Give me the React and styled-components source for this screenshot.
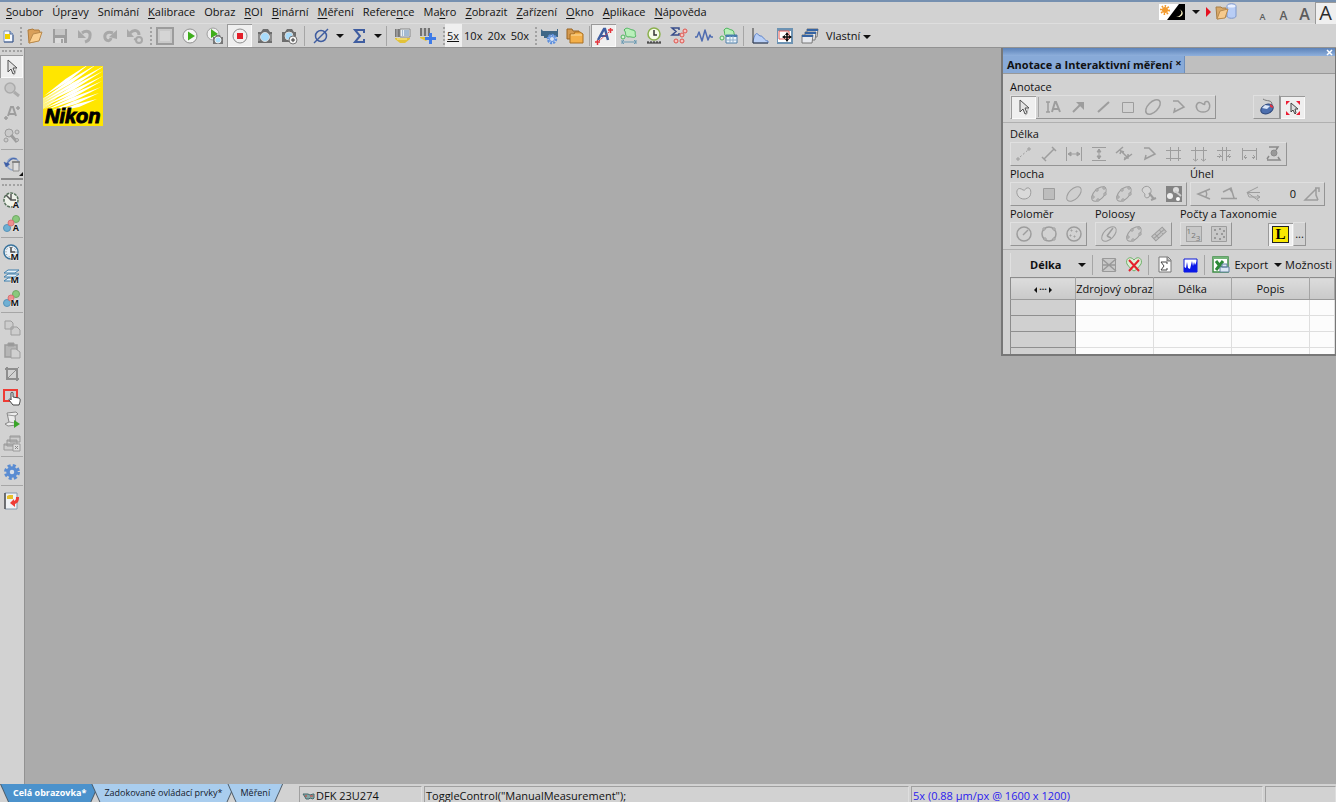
import React, { useState } from "react";
import styled, { createGlobalStyle } from "styled-components";

const GRAY = "#9d9d9d";

const icons = {
  newDoc: (
    <>
      <path d="M5 5h6l3 3v8H5z" fill="#f4f8ff" stroke="#7f96bd" />
      <path d="M11 5v3h3" fill="#b5c6e2" stroke="#4e6a9a" />
      <path d="M6 8h5v5H6z" fill="#f0d000" />
      <path d="M5 16h9M14 9v7" stroke="#3d5787" />
    </>
  ),
  open: (
    <>
      <path d="M3 4l5-1 1 1h5l1 2-3 9-8 2z" fill="#d9a05a" stroke="#b07c3c" />
      <path d="M4 17L8 8l9-2-3 9z" fill="#fbcf8f" stroke="#b98a4d" />
    </>
  ),
  save: (
    <>
      <path d="M3 3h14v14H3z" fill="#9e9e9e" />
      <path d="M5 3h10v6H5z" fill="#c6c6c6" />
      <path d="M5 12h9v5H5z" fill="#dcdcdc" />
      <path d="M11 13h2v4h-2z" fill="#a2a2a2" />
    </>
  ),
  undo: (
    <g fill="none" stroke="#a8a8a8" strokeWidth="3">
      <path d="M7 7c4-3 9-2 8 3 0 3-2 5-5 6" />
      <path d="M3 4v8h8z" fill="#a8a8a8" stroke="none" />
    </g>
  ),
  redo: (
    <g fill="none" stroke="#a8a8a8" strokeWidth="3">
      <path d="M13 7C7 5 4 8 5 12c1 3 5 4 6 0" />
      <path d="M9 11l8-7v9z" fill="#a8a8a8" stroke="none" />
    </g>
  ),
  undoList: (
    <g fill="none" stroke="#a8a8a8" strokeWidth="2">
      <path d="M5 7c4-4 9-3 9 2" strokeWidth="3" />
      <path d="M2 3v8h7z" fill="#a8a8a8" stroke="none" />
      <circle cx="14" cy="14" r="3" />
      <path d="M9 13l3 1" />
    </g>
  ),
  blank: (
    <>
      <path d="M2 2h16v16H2z" fill="#c9c9c9" stroke="#9c9c9c" strokeWidth="2" />
      <path d="M5 5h10v10H5z" fill="#d5d5d5" />
    </>
  ),
  play: (
    <>
      <circle cx="10" cy="10" r="7" fill="#f5f5f5" stroke="#909090" />
      <path d="M8 5.500l7 4.500-7 4.500z" fill="#3fae1c" />
    </>
  ),
  playCam: (
    <>
      <circle cx="8" cy="8" r="6" fill="#f0f0f0" stroke="#a0a0a0" />
      <path d="M6 3l7 5-7 4z" fill="#3fae1c" />
      <path d="M8 11h2l1-2h4l1 2h2v7H8z" fill="#777" />
      <circle cx="13" cy="14" r="3" fill="#aee0fb" stroke="#eee" />
    </>
  ),
  stop: (
    <>
      <circle cx="10" cy="10" r="7" fill="#f1f1f1" stroke="#8d8d8d" />
      <path d="M7 7h6v6H7z" fill="#e3202a" />
    </>
  ),
  camera: (
    <>
      <path d="M3 6h3l2-3h5l2 3h2v11H3z" fill="#6d6d6d" />
      <path d="M3 8h2v7H3zM15 8h2v7h-2z" fill="#8c8c8c" />
      <circle cx="10" cy="11" r="4.500" fill="#a9dcfb" stroke="#dcdcdc" />
    </>
  ),
  cameraPlus: (
    <>
      <path d="M2 6h3l2-3h5l2 3h2v10H2z" fill="#6d6d6d" />
      <circle cx="9" cy="10" r="4" fill="#a9dcfb" stroke="#dcdcdc" />
      <circle cx="13" cy="14" r="4" fill="#f2f2f2" stroke="#777" />
      <path d="M11 14h4M13 12v4" stroke="#333" />
    </>
  ),
  diameter: (
    <g fill="none" stroke="#3f5da0">
      <circle cx="10" cy="10" r="5.500" strokeWidth="1.500" />
      <path d="M3 17L17 3" strokeWidth="1.500" />
    </g>
  ),
  sigma: <path d="M15 7V4H6l5 6-5 6h9v-3" fill="none" stroke="#3f5da0" strokeWidth="2" />,
  objective: (
    <>
      <path d="M2 3h6v8H2z" fill="#777" />
      <path d="M4 3v8" stroke="#bbb" />
      <path d="M7 3h10v8H7z" fill="#e9eef2" stroke="#888" />
      <path d="M9 5h1M11 5h5M9 7h1M11 7h5M9 9h1M11 9h5" stroke="#5f86b0" />
      <path d="M2 12h15v1l-5 4H7l-5-4z" fill="#e2c239" />
      <path d="M4 13h10" stroke="#fbf0a4" />
    </>
  ),
  objectiveAdd: (
    <>
      <path d="M2 2h10v8H2z" fill="#737373" />
      <path d="M5 2v8M9 2v8" stroke="#d7d7d7" strokeWidth="1.500" />
      <path d="M2 11h9v1l-3 3-6-3z" fill="#e2c239" />
      <path d="M11 7h3v4h4v3h-4v4h-3v-4H7v-3h4z" fill="#3e7be8" />
    </>
  ),
  camSet: (
    <>
      <path d="M1 3l2 2h14V3h1v8h-3l-5-1-3 2H4v-2H1z" fill="#3f6786" />
      <circle cx="12" cy="13" r="4" fill="#c8dcf8" stroke="#5d8edb" strokeWidth="2.500" strokeDasharray="2 1" />
      <circle cx="12" cy="13" r="2.500" fill="#dbe5f3" stroke="#5d8edb" />
    </>
  ),
  folders: (
    <>
      <path d="M2 3h5l1 2h6v8H2z" fill="#d49a50" stroke="#9a6523" />
      <path d="M5 8h4l1-2h5l3 2v9H5z" fill="#f4b04a" stroke="#a86f22" />
      <path d="M6 9h11" stroke="#fbdca0" />
    </>
  ),
  annotate: (
    <>
      <path d="M4 14L10 3h1l3 11" fill="none" stroke="#3f5da0" strokeWidth="2.500" />
      <path d="M7 10h6" stroke="#3f5da0" strokeWidth="2" />
      <path d="M14 4h5M16.500 2v5M1 16h5M3.500 14v5" stroke="#e3343c" strokeWidth="1.500" />
      <path d="M5 15L16 5" stroke="#e3343c" strokeDasharray="2 1" />
    </>
  ),
  areaLen: (
    <>
      <path d="M5 4c3-4 6 0 9 0 4 1 1 4 3 6-2 3-5 0-8 1-4-1-1-4-4-7z" fill="#b9efba" stroke="#4cb45c" />
      <circle cx="4" cy="11" r="2" fill="#d8f3d6" stroke="#4cb45c" />
      <path d="M3 16h14M3 14v4M17 14v4M5 14l-2 2 2 2M15 14l2 2-2 2" stroke="#6b9ab2" fill="none" />
    </>
  ),
  timer: (
    <>
      <circle cx="10" cy="8" r="6" fill="#f5fae8" stroke="#8bb04e" strokeWidth="1.500" />
      <path d="M10 4v5h3" fill="none" stroke="#333" strokeWidth="1.500" />
      <path d="M3 17h14M4 15v2M7 15v2M10 15v2M13 15v2M16 15v2" stroke="#222" />
    </>
  ),
  sigmaDots: (
    <>
      <path d="M10 4V2H3l4 3.500L3 9h7V7" fill="none" stroke="#384d8a" strokeWidth="1.500" />
      <g fill="#f5c5c2" stroke="#e0534c">
        <circle cx="13" cy="9" r="2" /><circle cx="16" cy="5" r="2" />
        <circle cx="7" cy="15" r="2" /><circle cx="13" cy="15" r="2" />
      </g>
    </>
  ),
  wave: <path d="M1 11h2l2-5 3 9 3-11 3 10 2-5 1 2h2" fill="none" stroke="#4f6cb0" strokeWidth="1.500" strokeLinejoin="round" />,
  areaTable: (
    <>
      <path d="M5 4c3-4 5 0 8 0 3 1 1 4 3 5-2 3-6 2-9 1-2-1-1-3-2-6z" fill="#b9efba" stroke="#4cb45c" />
      <circle cx="3" cy="12" r="2" fill="#d8f3d6" stroke="#4cb45c" />
      <path d="M7 9h11v8H7z" fill="#eef5fb" stroke="#4f7fa8" />
      <path d="M7 10h11" stroke="#477dad" strokeWidth="2" />
      <path d="M7 14h11M11 10v7M14 10v7" stroke="#8fb0cc" />
    </>
  ),
  histogram: (
    <>
      <path d="M3 15c3-11 4-7 7-5 3-1 4 5 8 5v2H3z" fill="#b9cff5" stroke="#5c82c9" />
      <path d="M3 2v15h15" fill="none" stroke="#3c3c3c" />
    </>
  ),
  moveView: (
    <>
      <path d="M2 2h16v16H2z" fill="#6d93b3" />
      <path d="M3 5h13v11H3z" fill="#fff" />
      <path d="M4 5h10v8H4z" fill="#fff" stroke="#e25a54" />
      <path d="M12 7v8M8 11h8" stroke="#111" strokeWidth="1.500" />
      <path d="M12 6l2 3h-4zM12 16l2-3h-4zM7 11l3-2v4zM17 11l-3-2v4z" fill="#111" />
    </>
  ),
  windows: (
    <>
      {[[7, 3], [5, 6], [2, 9]].map(([x, y]) => (
        <g key={x}>
          <path d={`M${x} ${y}h11l-1 8H${x}z`} fill="#e7e9ee" stroke="#777" />
          <path d={`M${x} ${y + 1}h11`} stroke="#3664a3" strokeWidth="2" />
        </g>
      ))}
    </>
  ),
  pointer: (
    <>
      <path d="M6 3v12l3-3 2 5 2-1-2-5h4z" fill="#e4e4e4" stroke="#505050" />
      <path d="M14 12l-1 5-2 1" fill="none" stroke="#b5b5b5" />
    </>
  ),
  magnifier: (
    <>
      <circle cx="8" cy="8" r="5" fill="#c6c6c6" stroke="#ababab" strokeWidth="1.500" />
      <path d="M12 12l5 4" stroke="#ababab" strokeWidth="3" />
    </>
  ),
  annotateGray: (
    <g stroke={GRAY} fill="none">
      <path d="M6 13l3-9h2l3 9M7 11h6" strokeWidth="2" />
      <path d="M14 5h4M16 3v4M2 15h4M4 13v4" strokeWidth="1.500" />
    </g>
  ),
  nodesGray: (
    <g stroke={GRAY} fill="#cacaca">
      <circle cx="7" cy="7" r="4" />
      <path d="M9 9l6 7" strokeWidth="3" />
      <circle cx="15" cy="6" r="2" /><circle cx="4" cy="14" r="2" /><circle cx="15" cy="14" r="1.500" />
    </g>
  ),
  rotate: (
    <>
      <circle cx="11" cy="9" r="6" fill="none" stroke="#90a7cf" strokeWidth="1.500" />
      <path d="M15 4c-4-2-8 0-9 4l2 1-4 3-2-5 2 1" fill="#3c5ea7" stroke="#3c5ea7" strokeWidth=".5" />
      <path d="M7 8c1-3 4-5 7-3-3 1-5 3-6 5z" fill="#d2d2d2" />
      <path d="M11 7h6v9h-6z" fill="#dedede" stroke="#8d8d8d" />
      <path d="M10 7h8" stroke="#777" strokeWidth="1.500" />
    </>
  ),
  clock: (
    <g fill="#eef2ea">
      <circle cx="9" cy="9" r="7" stroke="#56705a" strokeWidth="1.500" strokeDasharray="3 1" />
      <path d="M9 3v6h5M9 9l-5-5" stroke="#555" strokeWidth="1.500" fill="none" />
    </g>
  ),
  clockBlue: (
    <g fill="#eaf2f8">
      <circle cx="9" cy="9" r="7" stroke="#39739c" strokeWidth="1.500" />
      <circle cx="9" cy="9" r="5" stroke="#777" strokeDasharray="1 2" />
      <path d="M9 4v5h4" stroke="#444" strokeWidth="1.500" fill="none" />
    </g>
  ),
  balls: (
    <>
      <circle cx="14" cy="5" r="3.500" fill="#8ac97d" stroke="#6fa964" />
      <circle cx="5" cy="14" r="3.500" fill="#6fb0d4" stroke="#5792b8" />
      <circle cx="9" cy="9" r="3" fill="#ef8f90" stroke="#d67374" />
    </>
  ),
  layers: (
    <g fill="#e6f1f8" stroke="#3f7fac">
      <path d="M2 15l4-3h11l-4 3zM2 11l4-3h11l-4 3zM2 7l4-3h11l-4 3z" />
    </g>
  ),
  copyGray: (
    <g fill="#cdcdcd" stroke={GRAY}>
      <path d="M3 3h6l2 2v6H3zM9 9h6l3 3v5H9z" />
    </g>
  ),
  pasteGray: (
    <g fill="#b6b6b6" stroke={GRAY}>
      <path d="M3 4h12v12H3z" strokeWidth="1.500" />
      <path d="M6 2h6v3H6z" fill="#999" />
      <path d="M9 8h5l4 3v6H9z" fill="#d0d0d0" />
    </g>
  ),
  crop: (
    <g fill="none" stroke="#8e8e8e" strokeWidth="2">
      <path d="M5 3v12h12M3 5h12v12" />
      <path d="M5 15L17 3" strokeWidth="1" />
    </g>
  ),
  roiHand: (
    <>
      <path d="M2 3h13v11H2z" fill="#cfd0d2" stroke="#ee3b34" strokeWidth="2" />
      <path d="M9 11V6c0-1 2-1 2 0v4l6 1c2 1 1 4 0 7h-6l-4-5c0-2 2-1 2 0z" fill="#fff" stroke="#444" />
    </>
  ),
  macroRun: (
    <>
      <path d="M5 3l9-1 2 2-3 2 1 9-8 1-3-2 4-2z" fill="#ececec" stroke="#888" />
      <path d="M6 5l8 1M7 12l6 1" stroke="#999" />
      <path d="M12 10l6 4-6 4z" fill="#3aa529" />
    </>
  ),
  closeAll: (
    <g fill="#cdcdcd" stroke="#999">
      <path d="M8 3h10v6H8zM5 7h10v6H5zM2 11h11v6H2z" />
      <path d="M2 12h11M5 8h10M8 4h10" />
      <path d="M11 11h7v7h-7z" fill="#ddd" />
      <path d="M13 13l3 3M16 13l-3 3" stroke="#888" />
    </g>
  ),
  gear: (
    <>
      <circle cx="10" cy="10" r="6.500" fill="none" stroke="#5a8cd2" strokeWidth="3" strokeDasharray="3 2.100" />
      <circle cx="10" cy="10" r="4" fill="#d8dfe9" stroke="#5a8cd2" strokeWidth="3.500" />
    </>
  ),
  report: (
    <>
      <path d="M3 2h12v16H3z" fill="#f0f3f6" stroke="#8698ac" />
      <path d="M3 2v16" stroke="#555" strokeWidth="1.500" />
      <path d="M5 5l2-1h4v4H5z" fill="#e6c02c" />
      <path d="M17 6c0 4-1 6-4 7v3l-5-4 4-4v2c2-1 2-2 2-4z" fill="#ee3c36" />
    </>
  ),
  dayNight: (
    <>
      <path d="M0 0h26v16H0z" fill="#fff" />
      <path d="M26 0v16H8L20 0z" fill="#000" />
      <circle cx="6" cy="6" r="3" fill="#f29a2e" />
      <circle cx="6" cy="6" r="4" fill="none" stroke="#f29a2e" strokeWidth="2" strokeDasharray="1.500 1.500" />
      <path d="M20 5c4 2 3 7-3 8 6 1 10-5 3-8z" fill="#fff7c8" />
    </>
  ),
  database: (
    <>
      <path d="M0 4l5 5-5 5z" fill="#e5101f" />
      <path d="M10 4h5l1 1h4v9l-9 2z" fill="#d7a869" stroke="#a77d45" />
      <path d="M21 3c0-3 9-3 9 0v10c0 3-9 3-9 0z" fill="#b8cdf5" stroke="#7d97cc" />
      <ellipse cx="25.500" cy="3" rx="4" ry="1.500" fill="#e9f0ff" />
      <path d="M11 16l3-8 8-2-3 9z" fill="#f6ca8d" stroke="#b98a4d" />
    </>
  ),
  closeMark: <path d="M1 1l5 5M6 1L1 6" stroke="#fff" strokeWidth="1.500" />,
  // annotation and measurement tools, all disabled
  textTool: (
    <g fill="none" stroke={GRAY} strokeWidth="1.500">
      <path d="M3 5h4M3 15h4M5 5v10" />
      <path d="M9 15l3-10h1l4 10M10 12h6" strokeWidth="2" />
    </g>
  ),
  arrowTool: (
    <>
      <path d="M5 15l7-7" stroke={GRAY} strokeWidth="2" />
      <path d="M8 5h8v8z" fill={GRAY} />
    </>
  ),
  lineTool: <path d="M5 15L16 5" stroke={GRAY} strokeWidth="2" />,
  rectTool: <path d="M4.500 5.500h11v10h-11z" fill="none" stroke={GRAY} />,
  ellipseTool: <ellipse cx="10" cy="10" rx="9" ry="5" transform="rotate(-45 10 10)" fill="none" stroke={GRAY} strokeWidth="1.500" />,
  polyTool: <path d="M5 4h5l6 6-10 5 1-4" fill="none" stroke={GRAY} strokeWidth="1.500" />,
  blobTool: <path d="M10 7c-5-4-8 1-6 5 2 4 10 4 12 0 2-5-1-9-4-7-1 2 1 3-2 2z" fill="none" stroke={GRAY} strokeWidth="1.500" />,
  mouse: (
    <>
      <path d="M6 2c4 3 9 0 9 6" fill="none" stroke="#777" />
      <ellipse cx="10" cy="12" rx="6.500" ry="4.500" transform="rotate(-25 10 12)" fill="#4d6fae" stroke="#2d477b" />
      <path d="M5 11l3-3 5 1-3 3z" fill="#dbe6f8" />
      <path d="M13 7l3 2v2l-3-1z" fill="#dd3444" />
    </>
  ),
  target: (
    <>
      <path d="M3 3h4L3 7zM17 3h-4l4 4zM3 17h4l-4-4zM17 17h-4l4-4z" fill="#ed1c33" />
      <path d="M8 5v9l2-2 2 4 1-1-1-4h3z" fill="#ddd" stroke="#444" />
    </>
  ),
  lenPoints: (
    <g stroke={GRAY} fill="none">
      <path d="M4 13v4M2 15h4M15 3v4M13 5h4" />
      <path d="M6 13l8-7" strokeDasharray="2 2" />
    </g>
  ),
  lenLine: <path d="M5 15L15 5M3 13l4 4M13 3l4 4" stroke={GRAY} strokeWidth="1.500" />,
  lenHoriz: (
    <g stroke={GRAY} fill={GRAY}>
      <path d="M2.500 3v14M17.500 3v14M4 10h12" />
      <path d="M4 10l3-2v4zM16 10l-3-2v4z" />
    </g>
  ),
  lenVert: (
    <g stroke={GRAY} fill={GRAY}>
      <path d="M3 3.500h14M3 16.500h14M10 5v10" />
      <path d="M10 5l2 3H8zM10 15l2-3H8z" />
    </g>
  ),
  lenPar: <path d="M2 9l7-6M10 16l8-6M6 6l8 8M6 10l1-3 3 1M14 10v4h-4" fill="none" stroke={GRAY} strokeWidth="1.500" />,
  grid: <path d="M6.500 3v14M14.500 3v14M2 6.500h15M2 14.500h15" stroke={GRAY} />,
  tees: <path d="M6.500 3v14M14.500 3v14M2 6.500h16M4 15l2.500 2L9 15M12 15l2.500 2 2.500-2" fill="none" stroke={GRAY} />,
  hashH: <path d="M8.500 3v14M12.500 3v14M3 6.500h14M3 12.500h5M17 12.500h-4M5 10l2 2-2 2M16 10l-2 2 2 2" fill="none" stroke={GRAY} />,
  span: <path d="M3.500 4v12M17.500 4v12M3 6.500h14M5 13.500h3M16 13.500h-3M7 11l-2 2 2 2M14 11l2 2-2 2" fill="none" stroke={GRAY} />,
  zScan: (
    <g stroke="#8a8a8a" fill="none">
      <path d="M5 3h9l-2 3M3 16h13l-2-3M5 12l-2 3" strokeWidth="1.500" />
      <circle cx="10" cy="9" r="3" fill="#999" />
    </g>
  ),
  areaBlob: <path d="M9 6C4 2 1 7 4 12c3 4 9 4 12 0 2-5 0-9-3-8-2 0-1 3-4 2z" fill="#dadada" stroke={GRAY} />,
  areaRect: <path d="M4.500 4.500h11v11h-11z" fill="#bdbdbd" stroke={GRAY} />,
  areaEllipse: <ellipse cx="10" cy="10" rx="9" ry="5" transform="rotate(-45 10 10)" fill="#cfcfcf" stroke={GRAY} />,
  areaEllipse5: (
    <g stroke={GRAY}>
      <ellipse cx="10" cy="10" rx="9" ry="5" transform="rotate(-45 10 10)" fill="#cfcfcf" />
      <path d="M14 3h2v2h-2zM7 5h2v2H7zM3 12h2v2H3zM8 15h2v2H8zM15 9h2v2h-2z" fill="#ddd" />
    </g>
  ),
  areaWand: (
    <g stroke={GRAY}>
      <path d="M4 4c4-4 9 0 8 4l-2 5c-3 2-5 0-4-3-2-2-4-3-2-6z" fill="#d6d6d6" />
      <path d="M10 9l5 6M12 16l5-2" strokeWidth="2" />
    </g>
  ),
  areaAuto: (
    <>
      <path d="M2 2h16v16H2z" fill="#838383" />
      <circle cx="6" cy="12" r="3" fill="#eee" />
      <circle cx="12" cy="6" r="3" fill="#ddd" />
      <circle cx="14" cy="15" r="2" fill="#fff" />
      <path d="M11 7l6 5" stroke="#ccc" strokeWidth="2" />
    </>
  ),
  angle: <path d="M16 5L4 10l12 5M12 7c1 2 1 4 0 6" fill="none" stroke={GRAY} strokeWidth="1.500" />,
  angle4: <path d="M4 8l8-4 3 10M2 14.500h16M11 5l2 3" fill="none" stroke={GRAY} strokeWidth="1.500" />,
  angleLines: <path d="M14 3L3 8.500h13M3 8l2 5h11M13 11l3 2-3 2M4 9l11 8" fill="none" stroke={GRAY} />,
  angleFree: <path d="M16 16H3L14 5v6l2 5M13 4h4v4" fill="none" stroke={GRAY} strokeWidth="1.500" />,
  radius: (
    <g fill="none" stroke={GRAY} strokeWidth="1.500">
      <circle cx="10" cy="10" r="7" /><path d="M9 11l5-5" />
    </g>
  ),
  radius3: (
    <g fill="none" stroke={GRAY} strokeWidth="1.500">
      <circle cx="10" cy="10" r="7" />
      <path d="M4 4h2v2H4zM14 4h2v2h-2zM5 14h2v2H5zM14 14h2v2h-2z" fill="#ddd" strokeWidth="1" />
    </g>
  ),
  radiusN: (
    <g fill="none" stroke={GRAY} strokeWidth="1.500">
      <circle cx="10" cy="10" r="7" />
      <path d="M7 6h1v1H7zM12 7h1v1h-1zM6 11h1v1H6zM10 12h1v1h-1z" fill="#ddd" strokeWidth="1" />
    </g>
  ),
  axis: (
    <g fill="none" stroke={GRAY}>
      <ellipse cx="10" cy="10" rx="9" ry="5" transform="rotate(-45 10 10)" />
      <path d="M8 12l6-8M8 12l4 2" strokeWidth="1.500" />
    </g>
  ),
  strip: (
    <g transform="rotate(-42 10 10)" fill="#c3c3c3" stroke={GRAY}>
      <path d="M3 7h14v6H3zM3 10h14M7 7v6M13 7v6" />
    </g>
  ),
  points: (
    <g fill="#c8c8c8" stroke={GRAY}>
      <path d="M2.500 2.500h15v15h-15z" />
      <path d="M5 6h2M10 5h2M14 7h2M7 10h2M12 10h2M5 14h2M10 15h2M14 13h2" stroke="#999" strokeWidth="2" />
    </g>
  ),
  boxOff: (
    <g fill="#c9c9c9" stroke="#999">
      <path d="M3.500 3.500h13v13h-13z" /><path d="M3 4l14 12M17 4L3 16M3 10h14" strokeWidth="1.500" />
    </g>
  ),
  heartOff: (
    <>
      <path d="M10 5C6 0 1 4 3 9c2 3 5 6 7 7 2-1 5-4 7-7 2-5-3-9-7-4z" fill="#dfeed9" stroke="#6fb069" />
      <path d="M5 5l10 11M15 5L5 16" stroke="#e5222c" strokeWidth="2" />
    </>
  ),
  sumPage: (
    <>
      <path d="M4 2h9l3 3v12H4z" fill="#fff" stroke="#777" />
      <path d="M12 2v4h4" fill="#aaa" stroke="#777" />
      <path d="M12 9V7H6l3 4-3 4h6v-2" fill="none" stroke="#444" />
    </>
  ),
  chart: (
    <>
      <path d="M4 4h13v13H4z" fill="#fff" stroke="#0b16d8" />
      <path d="M4 17v-5l2 1 1-6 1 6 2 1 2-8 1 5 1-4 1 3 2-4v11z" fill="#0a18e8" />
    </>
  ),
  excel: (
    <>
      <path d="M2 2h15v15H2z" fill="#fff" stroke="#3f8f47" strokeWidth="1.500" />
      <path d="M2 3h15" stroke="#73b578" strokeWidth="2" />
      <path d="M5 6l7 9M12 6l-7 9" stroke="#2c8a38" strokeWidth="3" />
      <path d="M9 12h9v5H9zM11 9h5v3h-5z" fill="#dce8f5" stroke="#61809f" />
    </>
  ),
  device: (
    <>
      <path d="M2 7h5l2 1 3-1h1v4l-1 1-3-1-1 1H5l-1-2z" fill="#85a7a7" stroke="#46696c" />
      <path d="M4 9h2M9 9h3" stroke="#d43c31" />
    </>
  ),
};

function Icon({ name, w = 20, h = 20 }) {
  return (
    <Svg width={w} height={h} viewBox={`0 0 ${w} ${h}`} aria-hidden="true">
      {icons[name]}
    </Svg>
  );
}

function Tool({ name, letter, ...rest }) {
  return (
    <ToolButton aria-label={name} {...rest}>
      <Icon name={name} />
      {letter && <Letter>{letter}</Letter>}
    </ToolButton>
  );
}

const menu = [
  ["", "S", "oubor"], ["Úpr", "a", "vy"], ["Snímání", "", ""], ["", "K", "alibrace"], ["Obraz", "", ""],
  ["", "R", "OI"], ["", "B", "inární"], ["", "M", "ěření"], ["Refere", "n", "ce"], ["Ma", "k", "ro"],
  ["", "Z", "obrazit"], ["", "Z", "ařízení"], ["", "O", "kno"], ["", "A", "plikace"], ["", "N", "ápověda"],
];

const sideTools = [
  ["grip"], ["pointer"], ["magnifier"], ["annotateGray"], ["nodesGray"], ["sep"],
  ["rotate", "corner"], ["split"], ["grip"], ["clock", "A"], ["balls", "A"], ["sep"],
  ["clockBlue", "M"], ["layers", "M"], ["balls", "M"], ["sep"],
  ["copyGray"], ["pasteGray"], ["crop"], ["roiHand"], ["macroRun"], ["closeAll"], ["sep"],
  ["gear"], ["sep"], ["report"],
];

// [start x, start y, tip x, tip y]
const rays = [
  [1, 30, 46, -2], [0, 33, 54, -2], [1, 35, 61, 0], [0, 38, 60, 5], [2, 40, 60, 10],
  [1, 43, 59, 15], [3, 44, 58, 21], [8, 45, 56, 27], [16, 45, 54, 33],
];

function NikonLogo() {
  return (
    <Logo viewBox="0 0 60 60" role="img" aria-label="Nikon">
      <path d="M0 0h60v60H0z" fill="#ffe600" />
      <path d="M0 32L26 19 6 40 0 43z" fill="#fff" opacity=".5" />
      <g fill="#fff">
        {rays.map(([x1, y1, x2, y2]) => {
          const mx = x1 + (x2 - x1) * 0.5;
          const my = y1 + (y2 - y1) * 0.5;
          return <path key={y2 + x2} d={`M${x1} ${y1} L${mx - 1} ${my - 1} L${x2} ${y2} L${mx + 1} ${my + 2}Z`} />;
        })}
      </g>
      <text x="2" y="57" fontSize="20">Nikon</text>
    </Logo>
  );
}

function ToolGroup({ title, names, children }) {
  return (
    <Group>
      <GroupTitle>{title}</GroupTitle>
      <Raised role="toolbar" aria-label={title}>
        {names.map((n, i) => <Tool key={i} name={n} />)}
        {children}
      </Raised>
    </Group>
  );
}

function MeasurePanel() {
  return (
    <Panel>
      <PanelBar><BarClose aria-label="Zavřít"><Icon name="closeMark" w={7} h={7} /></BarClose></PanelBar>
      <TabRow>
        <PanelTab>Anotace a Interaktivní měření <TabClose>×</TabClose></PanelTab>
      </TabRow>
      <PanelBody>
        <Section>
          <GroupTitle>Anotace</GroupTitle>
          <Spread>
            <Raised>
              <Tool name="pointer" $on />
              <Sep $small />
              {["textTool", "arrowTool", "lineTool", "rectTool", "ellipseTool", "polyTool", "blobTool"].map(n => (
                <Tool key={n} name={n} />
              ))}
            </Raised>
            <Pair>
              <Raised><Tool name="mouse" /></Raised>
              <Tool name="target" $on />
            </Pair>
          </Spread>
        </Section>
        <Section>
          <ToolGroup
            title="Délka"
            names={["lenPoints", "lenLine", "lenHoriz", "lenVert", "lenPar", "polyTool", "grid", "tees", "hashH", "span", "zScan"]}
          />
          <GroupRow $gap={3}>
            <ToolGroup
              title="Plocha"
              names={["areaBlob", "areaRect", "areaEllipse", "areaEllipse5", "areaEllipse5", "areaWand", "areaAuto"]}
            />
            <ToolGroup title="Úhel" names={["angle", "angle4", "angleLines"]}>
              <AngleValue>0</AngleValue>
              <Tool name="angleFree" />
            </ToolGroup>
          </GroupRow>
          <GroupRow $gap={8}>
            <ToolGroup title="Poloměr" names={["radius", "radius3", "radiusN"]} />
            <ToolGroup title="Poloosy" names={["axis", "areaEllipse5", "strip"]} />
            <ToolGroup title="Počty a Taxonomie" names={[]}>
              <ToolButton aria-label="Počty"><Count><i>1</i><i>2</i><i>3</i></Count></ToolButton>
              <Tool name="points" />
            </ToolGroup>
            <Pair>
              <ToolButton $on aria-label="Popisky"><LabelMark>L</LabelMark></ToolButton>
              <Raised><More>...</More></Raised>
            </Pair>
          </GroupRow>
        </Section>
        <Results>
          <ResultBar>
            <KindButton>Délka<Caret /></KindButton>
            <Sep />
            <Tool name="boxOff" />
            <Tool name="heartOff" />
            <Sep />
            <Tool name="sumPage" />
            <Tool name="chart" />
            <Sep />
            <Tool name="excel" />
            <TextButton>Export</TextButton>
            <CaretButton aria-label="Export"><Caret /></CaretButton>
            <TextButton>Možnosti</TextButton>
          </ResultBar>
          <Table>
            <colgroup>
              <col width="65" /><col width="78" /><col width="78" /><col width="78" /><col />
            </colgroup>
            <thead>
              <tr>
                <th><Fit><Caret $dir="left" /> ··· <Caret $dir="right" /></Fit></th>
                <th>Zdrojový obraz</th><th>Délka</th><th>Popis</th><th />
              </tr>
            </thead>
            <tbody>
              {[0, 1, 2, 3].map(r => (
                <tr key={r}><th /><td /><td /><td /><td /></tr>
              ))}
            </tbody>
          </Table>
        </Results>
      </PanelBody>
    </Panel>
  );
}

export default function App() {
  const [zoom, setZoom] = useState("5x");
  const [tab, setTab] = useState(0);

  return (
    <Page>
      <GlobalStyle />
      <TopStrip />
      <MenuBar>
        {menu.map(([a, key, b]) => (
          <MenuItem key={a + key + b}>{a}{key && <u>{key}</u>}{b}</MenuItem>
        ))}
        <TopRight>
          <PlainButton aria-label="Barevné schéma"><Icon name="dayNight" w={26} h={16} /></PlainButton>
          <CaretButton aria-label="Schéma"><Caret /></CaretButton>
          <PlainButton aria-label="Databáze"><Icon name="database" w={32} h={18} /></PlainButton>
          <Sizes>
            {[9, 12, 16, 20].map(s => (
              <SizeButton key={s} $size={s} $on={s === 20}>A</SizeButton>
            ))}
          </Sizes>
        </TopRight>
      </MenuBar>
      <ToolBar>
        <ToolButton $narrow aria-label="newDoc"><Icon name="newDoc" /></ToolButton>
        <Grip />
        {["open", "save", "undo", "redo", "undoList"].map(n => <Tool key={n} name={n} />)}
        <Grip />
        {["blank", "play", "playCam"].map(n => <Tool key={n} name={n} />)}
        <Tool name="stop" $on />
        <Tool name="camera" />
        <Tool name="cameraPlus" />
        <Sep />
        <Tool name="diameter" />
        <CaretButton aria-label="diameter"><Caret /></CaretButton>
        <Tool name="sigma" />
        <CaretButton aria-label="sigma"><Caret /></CaretButton>
        <Sep />
        <Tool name="objective" />
        <Tool name="objectiveAdd" />
        <Grip />
        {["5x", "10x", "20x", "50x"].map(z => (
          <ZoomButton key={z} $on={z === zoom} onClick={() => setZoom(z)}>{z}</ZoomButton>
        ))}
        <Grip />
        <Tool name="camSet" />
        <Tool name="folders" />
        <Sep $small />
        <Tool name="annotate" $on />
        {["areaLen", "timer", "sigmaDots", "wave", "areaTable"].map(n => <Tool key={n} name={n} />)}
        <Sep />
        {["histogram", "moveView", "windows"].map(n => <Tool key={n} name={n} />)}
        <TextButton>Vlastní <Caret /></TextButton>
      </ToolBar>
      <Work>
        <Side>
          {sideTools.map(([name, extra], i) => {
            if (name === "grip") return <Grip key={i} $flat />;
            if (name === "sep") return <Sep key={i} $flat />;
            if (name === "split") return <Sep key={i} $flat $dark />;
            return (
              <Tool key={i} name={name} letter={extra === "corner" ? null : extra} $corner={extra === "corner"} $on={i === 1} />
            );
          })}
        </Side>
        <Canvas>
          <NikonLogo />
          <MeasurePanel />
        </Canvas>
      </Work>
      <Status>
        <Tabs>
          {["Celá obrazovka*", "Zadokované ovládací prvky*", "Měření"].map((t, i) => (
            <LayoutTab key={t} $on={i === tab} onClick={() => setTab(i)}><span>{t}</span></LayoutTab>
          ))}
        </Tabs>
        <Cell><Icon name="device" w={15} h={18} />DFK 23U274</Cell>
        <Cell>ToggleControl("ManualMeasurement");</Cell>
        <Cell $blue>5x (0.88 µm/px @ 1600 x 1200)</Cell>
        <Cell />
      </Status>
    </Page>
  );
}

const GlobalStyle = createGlobalStyle`
  * {
    box-sizing: border-box;
  }
  body {
    margin: 0;
    background: #d2d2d2;
  }
  button {
    font: inherit;
    color: inherit;
    background: none;
    border: 0;
    padding: 0;
    margin: 0;
    white-space: nowrap;
  }
`;

const Page = styled.div`
  min-height: 100vh;
  display: flex;
  flex-direction: column;
  background: #d2d2d2;
  color: #111;
  font-family: "Open Sans", "Noto Sans", sans-serif;
  font-size: 11px;
  line-height: 16px;
`;

const Svg = styled.svg`
  display: block;
  flex: none;
`;

const TopStrip = styled.div`
  height: 2px;
  background: #7690b0;
`;

const MenuBar = styled.nav`
  height: 22px;
  display: flex;
  align-items: center;
  gap: 9px;
  padding: 0 0 2px 6px;
  border-bottom: 1px solid #dedede;
`;

const MenuItem = styled.button`
  u {
    text-underline-offset: 2px;
  }
`;

const TopRight = styled.div`
  flex: 1;
  align-self: stretch;
  display: flex;
  align-items: center;
  justify-content: flex-end;
`;

const PlainButton = styled.button`
  margin: 0 4px;
`;

const Sizes = styled.div`
  display: flex;
  align-items: baseline;
  align-self: flex-start;
  padding-left: 10px;
`;

const SizeButton = styled.button`
  width: 21px;
  height: 22px;
  line-height: 22px;
  font-size: ${p => p.$size}px;
  font-weight: ${p => (p.$on ? 400 : 600)};
  color: ${p => (p.$on ? "#2b2b2b" : "#5c5c5c")};
  background: ${p => (p.$on ? "#efefef" : "none")};
  box-shadow: ${p => (p.$on ? "inset 1px 1px #9a9a9a" : "none")};
`;

const ToolBar = styled.div`
  height: 24px;
  display: flex;
  align-items: center;
  border-bottom: 1px solid #929292;
`;

const ToolButton = styled.button`
  position: relative;
  flex: none;
  width: ${p => (p.$narrow ? 17 : 25)}px;
  height: 23px;
  display: flex;
  align-items: center;
  justify-content: center;
  ${p => p.$on && "background: #efefef; box-shadow: inset 1px 1px #9a9a9a, inset -1px -1px #fafafa;"}
  ${p => p.$corner && `
    &::after {
      content: "";
      position: absolute;
      right: 0;
      bottom: 0;
      border: 2px solid transparent;
      border-right-color: #111;
      border-bottom-color: #111;
    }
  `}
`;

const Letter = styled.span`
  position: absolute;
  right: 4px;
  bottom: 2px;
  font-size: 9px;
  line-height: 10px;
  font-weight: bold;
  color: #111;
  text-shadow: 0 0 2px #fff, 0 0 1px #fff;
`;

const Grip = styled.div`
  flex: none;
  width: ${p => (p.$flat ? "auto" : "5px")};
  height: ${p => (p.$flat ? "7px" : "18px")};
  ${p => p.$flat
    ? "border-top: 2px dotted #a2a2a2; margin: 2px 2px -2px;"
    : "border-right: 2px dotted #a2a2a2;"}
`;

const Sep = styled.div`
  flex: none;
  ${p => p.$flat
    ? `height: ${p.$dark ? 2 : 1}px; margin: ${p.$dark ? "2px 1px" : "2px 1px 3px"};`
    : `width: 1px; height: 20px; margin: 0 ${p.$small ? "1px 0 2px" : "3px 0 2px"};`}
  background: ${p => (p.$dark ? "#8a8a8a" : "#a6a6a6")};
`;

const Caret = styled.span`
  display: inline-block;
  vertical-align: middle;
  border: 4px solid transparent;
  ${p => {
    if (p.$dir === "left") return "border-width: 3px 3px 3px 0; border-right-color: #111;";
    if (p.$dir === "right") return "border-width: 3px 0 3px 3px; border-left-color: #111;";
    return "border-bottom-width: 0; border-top-color: #111;";
  }}
`;

const CaretButton = styled.button`
  width: 13px;
  display: flex;
  justify-content: center;
`;

const ZoomButton = styled.button`
  height: 23px;
  padding: 0 3px 0 2px;
  ${p => p.$on && "background: #efefef; text-decoration: underline;"}
`;

const TextButton = styled.button`
  padding: 0 4px;
`;

const Work = styled.main`
  flex: 1;
  display: flex;
`;

const Side = styled.aside`
  width: 25px;
  flex: none;
  display: flex;
  flex-direction: column;
  border-right: 1px solid #929292;

  ${ToolButton} {
    width: 23px;
  }
`;

const Canvas = styled.section`
  position: relative;
  flex: 1;
  padding: 18px;
  background: #ababab;
`;

const Logo = styled.svg`
  display: block;
  width: 60px;
  height: 60px;

  text {
    font-family: "Liberation Sans", Arial, sans-serif;
    font-weight: bold;
    font-style: italic;
    stroke: #000;
    stroke-width: 1px;
  }
`;

/* floats over the canvas */
const Panel = styled.section`
  position: absolute;
  top: 0;
  right: 0;
  width: 335px;
  background: #d2d2d2;
  border: 2px solid #777;
  border-top: 0;
  border-right-width: 1px;
`;

const PanelBar = styled.div`
  height: 8px;
  display: flex;
  align-items: center;
  justify-content: flex-end;
  background: linear-gradient(#5c82b8, #8fb0dc);
`;

const BarClose = styled.button`
  width: 9px;
`;

const TabRow = styled.div`
  display: flex;
  background: #bfbfbf;
  border-bottom: 1px solid #999;
`;

const PanelTab = styled.button`
  height: 17px;
  padding: 0 2px 0 4px;
  background: #88aad8;
  border-right: 1px solid #6d8fbd;
  font-weight: bold;
  color: #111;
`;

const TabClose = styled.span`
  vertical-align: 2px;
  line-height: 10px;
`;

const PanelBody = styled.div`
  padding-top: 5px;
`;

const Section = styled.div`
  padding: 0 8px 3px 7px;
  margin-bottom: 3px;
  border-bottom: 1px solid #b0b0b0;
`;

const Group = styled.div``;

const GroupTitle = styled.div`
  white-space: nowrap;
  line-height: 16px;
`;

const Raised = styled.div`
  display: flex;
  align-items: center;
  width: fit-content;
  height: 24px;
  border: 1px solid;
  border-color: #e0e0e0 #949494 #949494 #e0e0e0;
`;

const Spread = styled.div`
  display: flex;
  justify-content: space-between;
  padding-right: 22px;
`;

const Pair = styled.div`
  display: flex;
  align-items: flex-end;
`;

const GroupRow = styled.div`
  display: flex;
  gap: ${p => p.$gap}px;

  ${Pair} {
    margin-left: auto;
    padding-right: 22px;
  }
  ${Group}:nth-child(3) {
    width: 80px;
  }
`;

const AngleValue = styled.output`
  width: 33px;
  padding-right: 3px;
  text-align: right;
`;

const Count = styled.span`
  width: 16px;
  height: 16px;
  display: flex;
  justify-content: space-around;
  border: 1px solid #a3a3a3;
  background: #c8c8c8;
  color: #777;
  font-size: 8px;
  line-height: 7px;

  i {
    font-style: normal;
  }
  i:nth-child(2) {
    align-self: center;
  }
  i:nth-child(3) {
    align-self: flex-end;
  }
`;

const LabelMark = styled.span`
  width: 17px;
  height: 17px;
  border: 1px solid #222;
  background: #f8e800;
  color: #000;
  font: bold 15px/15px "Liberation Serif", serif;
`;

const More = styled.button`
  width: 11px;
`;

const Results = styled.div`
  margin-left: 7px;
`;

const ResultBar = styled.div`
  height: 24px;
  display: flex;
  align-items: center;
  border-left: 1px solid #e0e0e0;

  ${TextButton} {
    padding: 0 3px 0 1px;
  }
`;

const KindButton = styled.button`
  display: flex;
  align-items: center;
  justify-content: space-between;
  width: 80px;
  padding: 0 4px 0 19px;
  font-weight: bold;
`;

const Table = styled.table`
  width: 100%;
  table-layout: fixed;
  border-collapse: collapse;
  border-top: 1px solid #8c8c8c;
  border-left: 1px solid #8c8c8c;
  background: #fcfcfc;

  th, td {
    padding: 0;
    height: 16px;
    border: 1px solid #dedede;
    border-top: 0;
    border-left: 0;
    font-weight: normal;
    white-space: nowrap;
  }
  thead th {
    height: 22px;
    background: linear-gradient(#dcdcdc, #c9c9c9);
    border-color: #9a9a9a #a4a4a4;
  }
  tbody th {
    background: #d0d0d0;
    border-color: #8f8f8f;
  }
  tbody tr:last-child > * {
    height: 6px;
    border-bottom: 0;
  }
`;

const Fit = styled.span`
  font-weight: bold;
  font-size: 9px;
`;

const Status = styled.footer`
  height: 18px;
  display: grid;
  grid-template-columns: 297px 125px minmax(200px, 1fr) 354px 73px;
`;

const Tabs = styled.div`
  display: flex;
  font-size: 9px;
`;

/* the outer box is the slanted outline, the span inside is the fill */
const LayoutTab = styled.button`
  flex: none;
  height: 18px;
  margin-right: -8px;
  background: #4c5a66;
  clip-path: polygon(0 0, 100% 0, calc(100% - 8px) 100%, 8px 100%);
  font-weight: ${p => (p.$on ? "bold" : "normal")};

  span {
    display: block;
    height: 18px;
    padding: 0 13px;
    line-height: 18px;
    color: ${p => (p.$on ? "#fff" : "#15202c")};
    background: ${p => (p.$on ? "#4b92cc" : "#a9cdee")};
    clip-path: polygon(1px 0, calc(100% - 1px) 0, calc(100% - 9px) 100%, 9px 100%);
  }
`;

const Cell = styled.div`
  display: flex;
  align-items: center;
  height: 16px;
  margin: 2px 0 0 2px;
  padding: 2px 0 0 1px;
  white-space: nowrap;
  border: 1px solid #a0a0a0;
  border-bottom: 0;
  border-right-color: #dedede;
  color: ${p => (p.$blue ? "#2a20ee" : "inherit")};
`;
